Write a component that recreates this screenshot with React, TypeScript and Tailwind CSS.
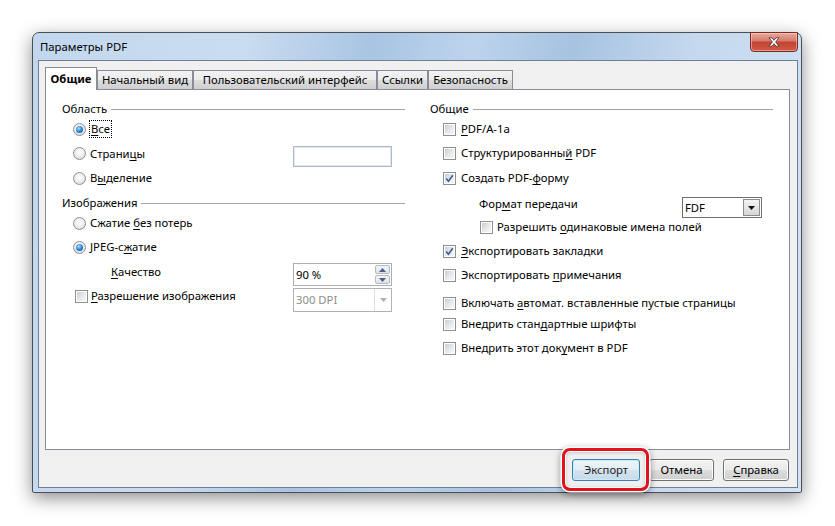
import React from "react";

const U = ({ children }: { children: React.ReactNode }) => (
  <span className="underline decoration-1 underline-offset-[2px]">{children}</span>
);

function Radio({ checked = false }: { checked?: boolean }) {
  return (
    <span className="flex h-[13px] w-[13px] shrink-0 items-center justify-center rounded-full border border-[#8e8f8f] bg-[radial-gradient(circle_at_50%_40%,#ffffff_0%,#f0f0f0_45%,#cfd1d4_100%)]">
      {checked && (
        <span className="h-[7px] w-[7px] rounded-full bg-[radial-gradient(circle_at_40%_35%,#a9e0ff_0%,#2a86d6_50%,#0b3d78_100%)]" />
      )}
    </span>
  );
}

function Check({ checked = false }: { checked?: boolean }) {
  return (
    <span className="flex h-[13px] w-[13px] shrink-0 border border-[#8e8f8f] bg-white p-[1px]">
      <span className="flex h-full w-full items-center justify-center bg-[linear-gradient(135deg,#c9cdd2_0%,#e6e8eb_50%,#f7f7f7_100%)]">
        {checked && (
          <svg width="9" height="9" viewBox="0 0 9 9">
            <path d="M1.2 4.6 L3.4 7.2 L7.8 1.2" fill="none" stroke="#3d5597" strokeWidth="1.5" />
          </svg>
        )}
      </span>
    </span>
  );
}

function Heading({ text }: { text: string }) {
  return (
    <div className="flex h-[20px] items-center">
      <span>{text}</span>
      <span className="ml-[4px] h-px flex-1 bg-[#a5a5a5]" />
    </div>
  );
}

function Button({ children, main = false }: { children: React.ReactNode; main?: boolean }) {
  return (
    <div
      className={
        main
          ? "flex h-[22px] w-[68px] items-center justify-center rounded-[3px] border border-[#3c7fb1] bg-[linear-gradient(#eef5fa_0%,#e3edf5_49%,#d4e3ee_50%,#c8dae8_100%)] text-[#1e1e1e] shadow-[inset_0_0_0_1px_#c7ecfc]"
          : "flex h-[22px] items-center justify-center rounded-[3px] border border-[#707070] bg-[linear-gradient(#f2f2f2_0%,#ebebeb_49%,#dddddd_50%,#cfcfcf_100%)] shadow-[inset_0_0_0_1px_#fcfcfc]"
      }
    >
      {children}
    </div>
  );
}

const tabs = [
  { label: "Начальный вид", w: "w-[96px]" },
  { label: "Пользовательский интерфейс", w: "w-[184px]" },
  { label: "Ссылки", w: "w-[51px]" },
  { label: "Безопасность", w: "w-[85px]" },
];

export default function App() {
  return (
    <div className="h-[526px] w-[835px] overflow-hidden bg-white pl-[32px] pt-[32px] font-['Segoe_UI','Noto_Sans',sans-serif] text-[11.3px] leading-none text-black">
      <div className="relative flex h-[461px] w-[770px] flex-col rounded-t-[7px] rounded-b-[2px] border border-[#4b4f55] bg-[linear-gradient(100deg,#c2d7ee_0%,#cadcf0_25%,#a9c5e3_40%,#bcd3ec_52%,#a7c3e1_64%,#c4d8ee_78%,#d3e3f4_100%)] shadow-[0_5px_18px_rgba(0,0,0,0.45)]">
        {/* title bar */}
        <div className="flex h-[27px] items-center pl-[7px]">Параметры PDF</div>
        <div className="absolute right-[3px] top-[-1px] flex h-[20px] w-[48px] items-center justify-center rounded-b-[4px] border border-[#7d2a25] bg-[linear-gradient(#e9a99b_0%,#d47b6c_45%,#c24232_50%,#cf5a45_100%)] shadow-[inset_0_0_0_1px_rgba(255,220,210,0.5)]">
          <svg width="12" height="10" viewBox="0 0 12 10">
            <path
              d="M1 0.8 H4 L6 3.3 L8 0.8 H11 L7.6 5 L11 9.2 H8 L6 6.7 L4 9.2 H1 L4.4 5 Z"
              fill="#ffffff"
              stroke="#4a2a28"
              strokeWidth="0.8"
            />
          </svg>
        </div>

        {/* client area */}
        <div className="flex flex-1 flex-col pb-[4px] pl-[5px] pr-[3px]">
          <div className="flex flex-1 flex-col border border-[#6f8094] bg-[#f0f0f0]">
            <div className="flex h-[28px] items-end pl-[6px]">
              <div className="relative z-10 -mb-px flex h-[23px] w-[52px] items-center justify-center border border-b-0 border-[#898c95] bg-white font-bold">
                Общие
              </div>
              {tabs.map((t) => (
                <div
                  key={t.label}
                  className={`flex h-[19px] ${t.w} items-center justify-center border border-b-0 border-[#898c95] bg-[linear-gradient(#f2f2f2_0%,#ebebeb_50%,#dddddd_51%,#cfcfcf_100%)]`}
                >
                  {t.label}
                </div>
              ))}
            </div>

            <div className="ml-[6px] flex h-[361px] w-[745px] border border-[#898c95] bg-white pl-[16px] pt-[9px]">
              {/* left column */}
              <div className="flex w-[343px] flex-col">
                <Heading text="Область" />
                <div className="flex h-[20px] items-center gap-[3px] pl-[11px]">
                  <Radio checked />
                  <span className="border border-dotted border-black px-px py-[2px]">
                    <U>В</U>се
                  </span>
                </div>
                <div className="mt-[7px] flex h-[21px] items-center">
                  <div className="mb-[6px] flex w-[231px] items-center gap-[4px] pl-[11px]">
                    <Radio />
                    <span>
                      Страни<U>ц</U>ы
                    </span>
                  </div>
                  <div className="h-[21px] w-[99px] border border-[#abb9cc] bg-white shadow-[inset_0_0_0_1px_#e2e8f0]" />
                </div>
                <div className="mt-[1px] flex h-[20px] items-center gap-[4px] pl-[11px]">
                  <Radio />
                  <span>
                    В<U>ы</U>деление
                  </span>
                </div>
                <div className="mt-[5px]">
                  <Heading text="Изображения" />
                </div>
                <div className="flex h-[20px] items-center gap-[4px] pl-[11px]">
                  <Radio />
                  <span>
                    Сжатие <U>б</U>ез потерь
                  </span>
                </div>
                <div className="mt-[4px] flex h-[20px] items-center gap-[4px] pl-[11px]">
                  <Radio checked />
                  <span>
                    JPEG-с<U>ж</U>атие
                  </span>
                </div>
                <div className="mt-[6px] flex h-[23px] items-center">
                  <span className="mb-[5px] w-[231px] pl-[49px]">
                    <U>К</U>ачество
                  </span>
                  <div className="flex h-[23px] w-[99px] items-stretch border border-[#abadb3] bg-white">
                    <span className="flex flex-1 items-center pl-[2px]">90 %</span>
                    <div className="my-[1px] mr-[1px] flex w-[15px] flex-col gap-px">
                      <div className="flex flex-1 items-center justify-center rounded-[2px] border border-[#b5bac1] bg-[linear-gradient(#f4f6f8,#dde3ea)]">
                        <svg width="7" height="4" viewBox="0 0 7 4">
                          <path d="M0 4 L3.5 0 L7 4 Z" fill="#4d5f84" />
                        </svg>
                      </div>
                      <div className="flex flex-1 items-center justify-center rounded-[2px] border border-[#b5bac1] bg-[linear-gradient(#f4f6f8,#dde3ea)]">
                        <svg width="7" height="4" viewBox="0 0 7 4">
                          <path d="M0 0 L3.5 4 L7 0 Z" fill="#4d5f84" />
                        </svg>
                      </div>
                    </div>
                  </div>
                </div>
                <div className="mt-[2px] flex h-[24px] items-center">
                  <div className="mb-[8px] flex w-[231px] items-center gap-[3px] pl-[13px]">
                    <Check />
                    <span>
                      <U>Р</U>азрешение изображения
                    </span>
                  </div>
                  <div className="flex h-[24px] w-[99px] items-stretch border border-[#adb2b5] bg-white text-[#8d8d8d]">
                    <span className="flex flex-1 items-center pl-[2px]">300 DPI</span>
                    <div className="flex w-[17px] items-center justify-center border-l border-[#dcdcdc]">
                      <svg width="7" height="4" viewBox="0 0 7 4">
                        <path d="M0 0 L3.5 4 L7 0 Z" fill="#b0b0b0" />
                      </svg>
                    </div>
                  </div>
                </div>
              </div>

              {/* right column */}
              <div className="ml-[25px] flex w-[343px] flex-col">
                <Heading text="Общие" />
                <div className="flex h-[20px] items-center gap-[5px] pl-[13px]">
                  <Check />
                  <span>
                    <U>P</U>DF/A-1a
                  </span>
                </div>
                <div className="mt-[4px] flex h-[20px] items-center gap-[5px] pl-[13px]">
                  <Check />
                  <span>
                    Структурированны<U>й</U> PDF
                  </span>
                </div>
                <div className="mt-[5px] flex h-[20px] items-center gap-[5px] pl-[13px]">
                  <Check checked />
                  <span>
                    Создать PDF-<U>ф</U>орму
                  </span>
                </div>
                <div className="mt-[9px] flex h-[21px] items-center">
                  <span className="mb-[8px] w-[252px] pl-[49px]">
                    Фор<U>м</U>ат передачи
                  </span>
                  <div className="flex h-[21px] w-[80px] items-stretch border border-[#707070] bg-white">
                    <span className="flex flex-1 items-center pl-[2px]">FDF</span>
                    <div className="my-[1px] mr-[1px] flex w-[17px] items-center justify-center border border-[#8c8c8c] bg-[linear-gradient(#f3f3f3_0%,#e6e6e6_50%,#d4d4d4_100%)]">
                      <svg width="7" height="4" viewBox="0 0 7 4">
                        <path d="M0 0 L3.5 4 L7 0 Z" fill="#111111" />
                      </svg>
                    </div>
                  </div>
                </div>
                <div className="flex h-[18px] items-center gap-[4px] pl-[50px]">
                  <Check />
                  <span>
                    Разрешить <U>о</U>динаковые имена полей
                  </span>
                </div>
                <div className="mt-[5px] flex h-[20px] items-center gap-[5px] pl-[13px]">
                  <Check checked />
                  <span>
                    <U>Э</U>кспортировать закладки
                  </span>
                </div>
                <div className="mt-[4px] flex h-[20px] items-center gap-[5px] pl-[13px]">
                  <Check />
                  <span>
                    Экспортировать <U>п</U>римечания
                  </span>
                </div>
                <div className="mt-[8px] flex h-[20px] items-center gap-[5px] pl-[13px]">
                  <Check />
                  <span>
                    Включать <U>а</U>втомат. вставленные пустые страницы
                  </span>
                </div>
                <div className="mt-[1px] flex h-[20px] items-center gap-[5px] pl-[13px]">
                  <Check />
                  <span>
                    Внедрить стан<U>д</U>артные шрифты
                  </span>
                </div>
                <div className="mt-[4px] flex h-[20px] items-center gap-[5px] pl-[13px]">
                  <Check />
                  <span>
                    Внедрить этот док<U>у</U>мент в PDF
                  </span>
                </div>
              </div>
            </div>

            {/* buttons */}
            <div className="flex justify-end gap-[9px] pr-[8px] pt-[9px]">
              <div className="relative">
                <Button main>Экспорт</Button>
                <div className="pointer-events-none absolute -bottom-[10px] -left-[10px] -right-[9px] -top-[11px] rounded-[8px] border-[3px] border-[#e0121c] shadow-[0_0_0_1.5px_#ffffff,0_2px_6px_2px_rgba(0,0,0,0.35),inset_0_0_0_1px_#ffffff,inset_0_1px_4px_rgba(0,0,0,0.25)]" />
              </div>
              <div className="w-[65px]">
                <Button>Отмена</Button>
              </div>
              <div className="w-[66px]">
                <Button>
                  <span>
                    <U>С</U>правка
                  </span>
                </Button>
              </div>
            </div>
          </div>
        </div>
      </div>
    </div>
  );
}
